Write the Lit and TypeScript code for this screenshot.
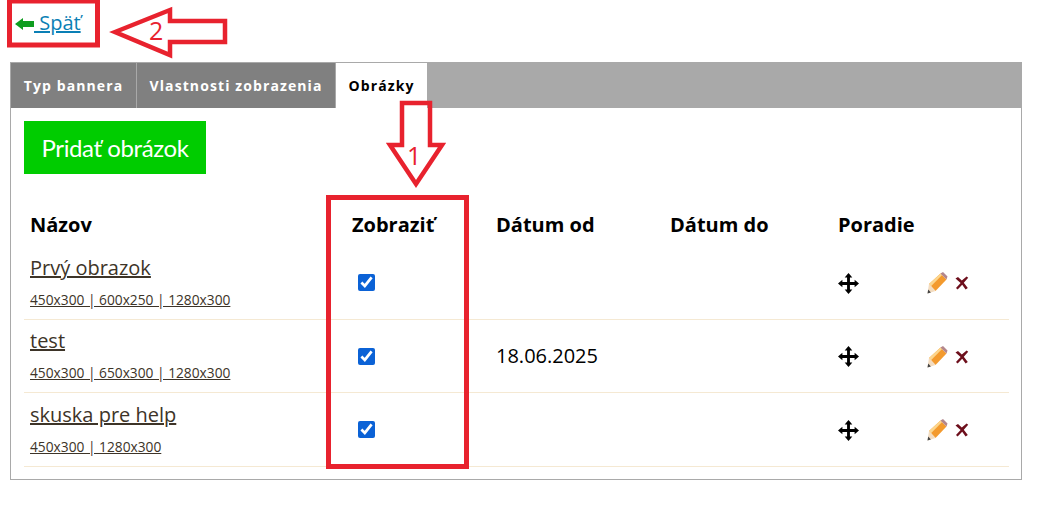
import { LitElement, html, css, svg } from 'lit';
import { customElement, state } from 'lit/decorators.js';

interface BannerImage {
  name: string;
  sizes: string;
  from: string;
}

const moveIcon = svg`
  <svg class="icon" width="21" height="21" viewBox="0 0 22 22">
    <path fill="#000" d="M11 0l4 4.6h-2.5v4.9h4.9V7l4.6 4-4.6 4v-2.5h-4.9v4.9H15L11 22l-4-4.6h2.5v-4.9H4.6V15L0 11l4.6-4v2.5h4.9V4.6H7z"/>
  </svg>
`;

const pencilIcon = svg`
  <svg class="icon" width="22" height="22" viewBox="0 0 22 22">
    <path fill="#f39a2e" d="M3 12 14.5 1.5l6 6L9.5 19z"/>
    <path fill="#fcd68e" d="M3 12 14.5 1.5l1.6 1.6L5 14.2z"/>
    <path fill="#b3868c" d="M14.5 1.5 17 0l4.5 4.5-1 3z"/>
    <path fill="#f3dcc0" d="M3 12l6.5 7-8 2.5z"/>
    <path fill="#444" d="M2.2 17.4l2.7 3-3.4 1.1z"/>
  </svg>
`;

const crossIcon = svg`
  <svg class="icon" width="14" height="14" viewBox="0 0 14 14">
    <path fill="#6d0f1c" d="M.5 2.5 3 1l3.8 3.6L11.6.6l1.6 1.2-4.4 5 4 5.2-2.2 1.4-3.4-4.6L2.6 13.4 1 12l4.6-5z"/>
  </svg>
`;

@customElement('app-root')
export class AppRoot extends LitElement {
  @state() images: BannerImage[] = [
    { name: 'Prvý obrazok', sizes: '450x300 | 600x250 | 1280x300', from: '' },
    { name: 'test', sizes: '450x300 | 650x300 | 1280x300', from: '18.06.2025' },
    { name: 'skuska pre help', sizes: '450x300 | 1280x300', from: '' },
  ];

  static styles = css`
    :host {
      display: block;
      position: relative;
      width: 1038px;
      height: 518px;
      background-color: #FFFFFF;
      color: #000000;
      font-family: "Open Sans", sans-serif;
      overflow: hidden;
    }

    .page {
      padding: 10px 16px 0 10px;
    }

    .back {
      display: flex;
      align-items: center;
      height: 24px;
      padding-left: 5px;
      color: #0a7fb5;
      font-size: 20px;
    }

    .back svg {
      margin-top: 4px;
    }

    .back a {
      color: inherit;
      text-decoration: underline;
      white-space: pre;
    }

    .panel {
      margin-top: 28px;
      height: 418px;
      box-sizing: border-box;
      border: 1px solid #a9a9a9;
    }

    .tabs {
      display: flex;
      height: 45px;
      background-color: #a9a9a9;
    }

    .tab {
      display: flex;
      align-items: center;
      justify-content: center;
      box-sizing: border-box;
      background-color: #808080;
      border-right: 1px solid #a9a9a9;
      color: #FFFFFF;
      font-size: 14px;
      font-weight: 700;
      letter-spacing: 1.1px;
    }

    .tab.first {
      width: 126px;
    }

    .tab.second {
      width: 199px;
    }

    .tab.active {
      width: 91px;
      background-color: #FFFFFF;
      border-right: none;
      color: #000000;
    }

    .content {
      padding: 13px 12px 0 13px;
    }

    .add {
      display: flex;
      align-items: center;
      justify-content: center;
      width: 182px;
      height: 53px;
      background-color: #00cc00;
      color: #FFFFFF;
      font-family: Lato, sans-serif;
      font-size: 24px;
      letter-spacing: -0.4px;
    }

    table {
      margin-top: 30px;
      width: 985px;
      border-collapse: collapse;
      table-layout: fixed;
    }

    th {
      height: 42px;
      padding: 0 6px 2px;
      box-sizing: border-box;
      font-size: 20px;
      font-weight: 700;
      text-align: left;
    }

    td {
      height: 73px;
      padding: 0 6px;
      box-sizing: border-box;
      border-bottom: 1px solid #f5e9d3;
      font-size: 20px;
      vertical-align: middle;
    }

    tbody tr:last-child td {
      height: 74px;
    }

    .name {
      color: #3d3428;
      font-size: 20px;
      line-height: 26px;
      text-decoration: underline;
    }

    .sizes {
      margin-top: 10px;
      color: #3d3428;
      font-size: 13.75px;
      line-height: 18px;
      text-decoration: underline;
      white-space: pre;
    }

    tbody tr:nth-child(2) td.name-cell {
      padding-bottom: 2px;
    }

    tbody tr:nth-child(2) .check {
      margin-top: 2px;
    }

    td.icon-cell {
      padding-top: 2px;
    }

    .check {
      display: block;
      width: 17px;
      height: 17px;
      margin: 0 0 0 6px;
      accent-color: #0b62d6;
    }

    .icon {
      display: block;
    }

    .actions {
      display: flex;
      align-items: center;
      gap: 7px;
    }

    .annotation {
      position: absolute;
      left: 0;
      top: 0;
      pointer-events: none;
    }

    .annotation text {
      fill: #e8222e;
      font-family: "Open Sans", sans-serif;
      font-size: 25px;
    }
  `;

  renderRow(image: BannerImage) {
    return html`
      <tr>
        <td class="name-cell">
          <div class="name">${image.name}</div>
          <div class="sizes">${image.sizes}</div>
        </td>
        <td><input class="check" type="checkbox" checked /></td>
        <td>${image.from}</td>
        <td></td>
        <td class="icon-cell">${moveIcon}</td>
        <td class="icon-cell">
          <div class="actions">${pencilIcon}${crossIcon}</div>
        </td>
      </tr>
    `;
  }

  render() {
    return html`
      <div class="page">
        <div class="back">
          <svg width="19" height="14" viewBox="0 0 19 14">
            <path fill="#0f9d1f" d="M0 7l8-6v3h11v6H8v3z"/>
          </svg>
          <a href="#"> Späť</a>
        </div>

        <div class="panel">
          <div class="tabs">
            <div class="tab first">Typ bannera</div>
            <div class="tab second">Vlastnosti zobrazenia</div>
            <div class="tab active">Obrázky</div>
          </div>

          <div class="content">
            <div class="add">Pridať obrázok</div>

            <table>
              <colgroup>
                <col style="width: 322px" />
                <col style="width: 144px" />
                <col style="width: 174px" />
                <col style="width: 168px" />
                <col style="width: 88px" />
                <col style="width: 89px" />
              </colgroup>
              <thead>
                <tr>
                  <th>Názov</th>
                  <th>Zobraziť</th>
                  <th>Dátum od</th>
                  <th>Dátum do</th>
                  <th>Poradie</th>
                  <th></th>
                </tr>
              </thead>
              <tbody>
                ${this.images.map(image => this.renderRow(image))}
              </tbody>
            </table>
          </div>
        </div>
      </div>

      <svg class="annotation" width="1038" height="518" viewBox="0 0 1038 518" fill="none">
        <rect x="9.5" y="1" width="88" height="44" stroke="#e8222e" stroke-width="5"/>
        <path d="M115 32 170 10v11h55v21h-55v13z" stroke="#e8222e" stroke-width="4.5"/>
        <text x="149" y="40">2</text>
        <path d="M402 103h28v42h12l-26 39-26-39h12z" stroke="#e8222e" stroke-width="4.5"/>
        <text x="407" y="165">1</text>
        <rect x="328.5" y="197.5" width="138" height="269" stroke="#e8222e" stroke-width="5"/>
      </svg>
    `;
  }
}
